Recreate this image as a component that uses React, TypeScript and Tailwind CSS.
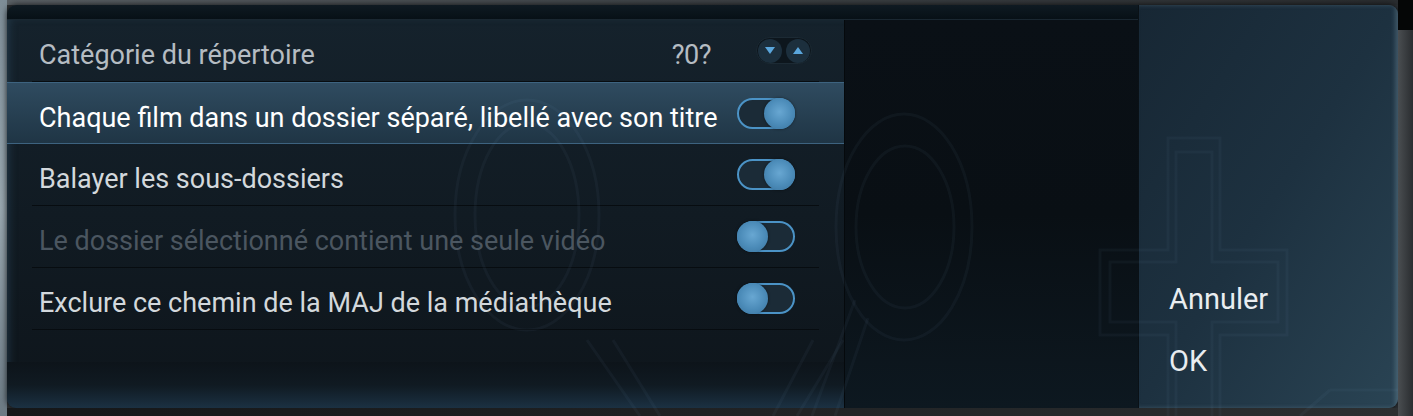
import React from "react";

function Toggle({ on }: { on: boolean }) {
  return (
    <div className="relative w-[58px] h-[31px] shrink-0">
      <div className="absolute inset-0 rounded-full border-2 border-[#4b93c6] bg-[#1b2b37]" />
      <div
        className={
          "absolute top-0 w-[31px] h-[31px] rounded-full bg-[radial-gradient(circle_at_50%_45%,#68a7d2_0%,#4b8bb8_55%,#3a739d_100%)] shadow-[0_0_3px_rgba(0,0,0,0.5)] " +
          (on ? "right-0" : "left-0")
        }
      />
    </div>
  );
}

function Spinner() {
  return (
    <div className="flex items-center gap-[4px] h-[27px] px-[1px] rounded-full bg-[#0d161d] border border-[#1c2a34]">
      <div className="w-[24px] h-[24px] rounded-full bg-[#1c2f3d] flex items-center justify-center">
        <svg width="10" height="7" viewBox="0 0 10 7"><path d="M0 0 L10 0 L5 7 Z" fill="#5aa6dc" /></svg>
      </div>
      <div className="w-[24px] h-[24px] rounded-full bg-[#1c2f3d] flex items-center justify-center">
        <svg width="10" height="7" viewBox="0 0 10 7"><path d="M0 7 L10 7 L5 0 Z" fill="#5aa6dc" /></svg>
      </div>
    </div>
  );
}

function Row({ label, on, tone }: { label: string; on: boolean; tone: string }) {
  return (
    <div className="h-[62px] mx-[25px] border-b border-[#070c10] flex items-center pl-[7px] pr-[24px]">
      <span className={"flex-1 pt-[10px] " + tone}>{label}</span>
      <Toggle on={on} />
    </div>
  );
}

export default function App() {
  return (
    <div className="w-[1413px] h-[416px] flex overflow-hidden bg-[#2d3135] relative">
      <div className="w-[7px] h-full bg-gradient-to-b from-[#7e8d97] via-[#98a7b0] to-[#6c7a84]" />
      <div className="flex-1 flex flex-col">
        <div className="h-[5px] bg-gradient-to-r from-[#5a6065] via-[#3e4347] to-[#2a2d30]" />
        <div className="flex-1 flex rounded-[9px] overflow-hidden shadow-[0_0_6px_rgba(0,0,0,0.8)]">
          {/* left column */}
          <div className="w-[1131px] flex flex-col">
            <div className="h-[15px] bg-gradient-to-b from-[#0f1a22] to-[#071016] border-b border-[#1a2731]" />
            <div className="flex-1 flex">
              {/* list panel */}
              <div className="w-[838px] flex flex-col bg-gradient-to-b from-[#15222c] via-[#111b23] to-[#0e151b] border-r border-[#05090c] shadow-[inset_6px_0_8px_-4px_rgba(60,100,130,0.35)] font-['Roboto',sans-serif] text-[27px]">
                <div className="h-[62px] mx-[25px] border-b border-[#070c10] flex items-center pl-[7px] pr-[7px] text-[#b5bcc2]">
                  <span className="flex-1 pt-[10px]">Catégorie du répertoire</span>
                  <span className="mr-[45px] pt-[10px] tracking-[-0.5px]">?0?</span>
                  <Spinner />
                </div>
                <div className="h-[62px] border-y border-[#3d6380] bg-gradient-to-b from-[#2f4b60] via-[#274052] to-[#1f3545] flex items-center pl-[32px] pr-[49px] text-white">
                  <span className="flex-1 pt-[10px]">Chaque film dans un dossier séparé, libellé avec son titre</span>
                  <Toggle on />
                </div>
                <Row label="Balayer les sous-dossiers" on tone="text-[#d3d8dc]" />
                <Row label="Le dossier sélectionné contient une seule vidéo" on={false} tone="text-[#4b5660]" />
                <Row label="Exclure ce chemin de la MAJ de la médiathèque" on={false} tone="text-[#d3d8dc]" />
                <div className="flex-1 flex flex-col justify-end">
                  <div className="h-[46px] bg-gradient-to-b from-[#0d141a] via-[#101a22] to-[#1b3143]" />
                </div>
              </div>
              {/* middle */}
              <div className="flex-1 bg-gradient-to-b from-[#0a1016] via-[#090f14] to-[#0d1820]" />
            </div>
          </div>
          {/* right panel */}
          <div className="flex-1 flex flex-col justify-end pb-[15px] pl-[30px] border-l border-[#0a1116] bg-gradient-to-br from-[#172734] via-[#1d3140] to-[#2a4454] shadow-[inset_-3px_0_4px_rgba(140,170,190,0.3)] font-['Roboto',sans-serif] text-[29px] text-[#e9edf0]">
            <div className="h-[62px] flex items-center">Annuler</div>
            <div className="h-[62px] flex items-center">OK</div>
          </div>
        </div>
        <div className="h-[8px] bg-gradient-to-r from-[#151719] via-[#1f2123] to-[#2c2f31]" />
      </div>
      <div className="w-[15px] h-full flex flex-col">
        <div className="h-[30px] bg-[#050606]" />
        <div className="flex-1 bg-gradient-to-r from-[#4a4e51] to-[#2a2d30]" />
      </div>
      <svg className="absolute inset-0 pointer-events-none" width="1413" height="416" viewBox="0 0 1413 416" fill="none" stroke="rgba(130,170,200,0.055)" strokeWidth="3">
        <ellipse cx="527" cy="215" rx="72" ry="115" />
        <ellipse cx="527" cy="215" rx="52" ry="92" />
        <ellipse cx="904" cy="227" rx="68" ry="113" />
        <ellipse cx="905" cy="227" rx="49" ry="81" />
        <path d="M855 300 L812 416" />
        <path d="M868 318 L835 416" />
        <path d="M587 340 L640 416 M613 340 L660 416" />
        <path d="M813 340 L773 416 M843 340 L797 416" />
        <path d="M1168 138 L1220 138 L1220 250 L1287 250 L1287 335 L1220 335 L1220 448 L1168 448 L1168 335 L1100 335 L1100 250 L1168 250 Z" />
        <path d="M1176 152 L1212 152 L1212 262 L1278 262 L1278 322 L1212 322 L1212 440 L1176 440 L1176 322 L1110 322 L1110 262 L1176 262 Z" />
        <path d="M1330 390 L1398 390 M1330 390 L1300 416" />
      </svg>
    </div>
  );
}
